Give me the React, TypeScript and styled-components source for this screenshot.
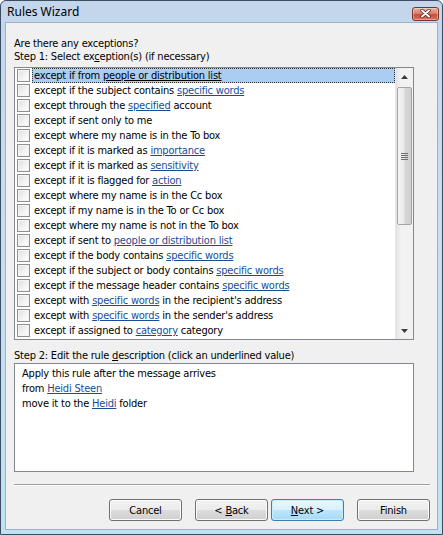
import React from 'react'
import styled, { createGlobalStyle, css } from 'styled-components'

const GlobalStyle = createGlobalStyle`
    html, body {
        margin: 0;
        padding: 0;
        background: #fff;
    }
    body {
        font-family: "DejaVu Sans Condensed", "Liberation Sans", sans-serif;
        font-size: 11px;
        letter-spacing: -0.2px;
        color: #000;
    }
`

const Window = styled.div`
    width: 443px;
    height: 535px;
    box-sizing: border-box;
    border: 1px solid #3a4d63;
    border-radius: 6px 6px 0 0;
    padding: 0 4px 4px 4px;
    background: linear-gradient(#c3d6ec, #cadcf0 40%, #bfe3f0);
    display: flex;
    flex-direction: column;
`
const TitleBar = styled.div`
    height: 21px;
    display: flex;
    align-items: center;
    justify-content: space-between;
    padding: 0 0 0 2px;
`
const Title = styled.div`
    font-family: "Noto Sans", "Open Sans", sans-serif;
    font-size: 12px;
    letter-spacing: 0;
    color: #000;
`
const CloseButton = styled.div`
    width: 27px;
    height: 14px;
    box-sizing: border-box;
    margin-top: 4px;
    margin-right: -1px;
    border: 1px solid #7a3326;
    border-radius: 3px;
    background: linear-gradient(#eab0a4, #d9806f 45%, #c4503b 55%, #d7735d);
    display: flex;
    align-items: center;
    justify-content: center;
    box-shadow: inset 0 0 0 1px rgba(255,255,255,0.35);
`
const Client = styled.div`
    flex: 1;
    border: 1px solid #9db2ca;
    background: #f0f0f0;
    padding: 14px 7px 0 8px;
    display: flex;
    flex-direction: column;
`
const Label = styled.div<{ $gap?: number }>`
    line-height: 13px;
    height: 13px;
    margin-top: ${(p) => p.$gap ?? 0}px;
`
const ListBox = styled.div`
    width: 400px;
    height: 273px;
    box-sizing: border-box;
    margin-top: 4px;
    border: 1px solid #828790;
    background: #fff;
    display: flex;
`
const Rows = styled.div`
    flex: 1;
    display: flex;
    flex-direction: column;
`
const Row = styled.div`
    height: 15px;
    display: flex;
    align-items: center;
`
const CheckBox = styled.div`
    width: 13px;
    height: 13px;
    box-sizing: border-box;
    margin-left: 2px;
    border: 1px solid #8e8f8f;
    background: linear-gradient(135deg, #dedede, #f8f8f8 70%, #fff);
    box-shadow: inset 0 0 0 1px #f4f4f4;
    flex-shrink: 0;
`
const RowText = styled.div<{ $selected?: boolean }>`
    flex: 1;
    height: 15px;
    box-sizing: border-box;
    margin-left: 2px;
    padding-left: 1px;
    line-height: 13px;
    white-space: nowrap;
    border: 1px solid transparent;
    ${(p) => p.$selected && css`
        background: #aacdf1;
        border: 1px dotted #333;
        a { color: #000; }
    `}
`
const Link = styled.a`
    color: #1a4c96;
    text-decoration: underline;
`
const ScrollBar = styled.div`
    width: 17px;
    display: flex;
    flex-direction: column;
    background: linear-gradient(to right, #e3e3e3, #f2f2f2 30%, #f2f2f2);
    border-left: 1px solid #e6e6e6;
`
const ArrowButton = styled.div`
    height: 17px;
    display: flex;
    align-items: center;
    justify-content: center;
`
const Track = styled.div`
    flex: 1;
    padding-top: 2px;
`
const Thumb = styled.div`
    height: 138px;
    margin: 0 1px;
    box-sizing: border-box;
    border: 1px solid #a5a5a5;
    border-radius: 2px;
    background: linear-gradient(to right, #f4f4f4, #e9e9e9 45%, #d6d6d6 55%, #cfcfcf);
    display: flex;
    align-items: center;
    justify-content: center;
`
const Grip = styled.div`
    width: 7px;
    height: 7px;
    background: repeating-linear-gradient(#6f6f6f 0 1px, transparent 1px 2px);
`
const DescBox = styled.div`
    width: 400px;
    height: 109px;
    box-sizing: border-box;
    margin-top: 1px;
    border: 1px solid #828790;
    background: #fff;
    padding: 2px 7px;
`
const DescLine = styled.div`
    line-height: 15px;
    height: 15px;
`
const Separator = styled.div`
    margin-top: 12px;
    border-top: 1px solid #a0a0a0;
    border-bottom: 1px solid #fff;
`
const Buttons = styled.div`
    margin-top: 13px;
    display: flex;
    justify-content: flex-end;
`
const Button = styled.div<{ $default?: boolean; $gap?: number }>`
    width: 73px;
    height: 22px;
    box-sizing: border-box;
    margin-left: ${(p) => p.$gap ?? 0}px;
    border: 1px solid #707070;
    border-radius: 3px;
    background: linear-gradient(#f2f2f2, #ebebeb 50%, #dddddd 51%, #cfcfcf);
    box-shadow: inset 0 0 0 1px #fbfbfb;
    display: flex;
    align-items: center;
    justify-content: center;
    white-space: pre;
    ${(p) => p.$default && css`
        border-color: #3c7fb1;
        background: linear-gradient(#eaf6fd, #d9f0fc 50%, #bee6fd 51%, #a7d9f5);
        box-shadow: inset 0 0 0 1px #c9eefc;
    `}
`
const U = styled.span`
    text-decoration: underline;
`

type Seg = string | { link: string }

const items: Seg[][] = [
    ['except if from ', { link: 'people or distribution list' }],
    ['except if the subject contains ', { link: 'specific words' }],
    ['except through the ', { link: 'specified' }, ' account'],
    ['except if sent only to me'],
    ['except where my name is in the To box'],
    ['except if it is marked as ', { link: 'importance' }],
    ['except if it is marked as ', { link: 'sensitivity' }],
    ['except if it is flagged for ', { link: 'action' }],
    ['except where my name is in the Cc box'],
    ['except if my name is in the To or Cc box'],
    ['except where my name is not in the To box'],
    ['except if sent to ', { link: 'people or distribution list' }],
    ['except if the body contains ', { link: 'specific words' }],
    ['except if the subject or body contains ', { link: 'specific words' }],
    ['except if the message header contains ', { link: 'specific words' }],
    ['except with ', { link: 'specific words' }, " in the recipient's address"],
    ['except with ', { link: 'specific words' }, " in the sender's address"],
    ['except if assigned to ', { link: 'category' }, ' category'],
]

const renderSegs = (segs: Seg[]) =>
    segs.map((s, i) => (typeof s === 'string' ? <span key={i}>{s}</span> : <Link key={i}>{s.link}</Link>))

const App = (): JSX.Element => {
    return (
        <>
            <GlobalStyle />
            <Window>
                <TitleBar>
                    <Title>Rules Wizard</Title>
                    <CloseButton>
                        <svg width="11" height="9" viewBox="0 0 11 9">
                            <path d="M2 1.5 L9 7.5 M9 1.5 L2 7.5" stroke="#5a1f15" strokeWidth="3.4" strokeLinecap="round" />
                            <path d="M2 1.5 L9 7.5 M9 1.5 L2 7.5" stroke="#fff" strokeWidth="2" strokeLinecap="round" />
                        </svg>
                    </CloseButton>
                </TitleBar>
                <Client>
                    <Label>Are there any exceptions?</Label>
                    <Label>Step 1: Select ex<U>c</U>eption(s) (if necessary)</Label>
                    <ListBox>
                        <Rows>
                            {items.map((segs, i) => (
                                <Row key={i}>
                                    <CheckBox />
                                    <RowText $selected={i === 0}>{renderSegs(segs)}</RowText>
                                </Row>
                            ))}
                        </Rows>
                        <ScrollBar>
                            <ArrowButton>
                                <svg width="7" height="4" viewBox="0 0 7 4">
                                    <path d="M0 4 L3.5 0 L7 4 Z" fill="#3c3c3c" />
                                </svg>
                            </ArrowButton>
                            <Track>
                                <Thumb>
                                    <Grip />
                                </Thumb>
                            </Track>
                            <ArrowButton>
                                <svg width="7" height="4" viewBox="0 0 7 4">
                                    <path d="M0 0 L7 0 L3.5 4 Z" fill="#3c3c3c" />
                                </svg>
                            </ArrowButton>
                        </ScrollBar>
                    </ListBox>
                    <Label $gap={9}>Step 2: Edit the rule <U>d</U>escription (click an underlined value)</Label>
                    <DescBox>
                        <DescLine>Apply this rule after the message arrives</DescLine>
                        <DescLine>from <Link>Heidi Steen</Link></DescLine>
                        <DescLine>move it to the <Link>Heidi</Link> folder</DescLine>
                    </DescBox>
                    <Separator />
                    <Buttons>
                        <Button>Cancel</Button>
                        <Button $gap={13}>{'< '}<U>B</U>ack</Button>
                        <Button $gap={3} $default><U>N</U>{'ext >'}</Button>
                        <Button $gap={13}>Finish</Button>
                    </Buttons>
                </Client>
            </Window>
        </>
    )
}

export default App
